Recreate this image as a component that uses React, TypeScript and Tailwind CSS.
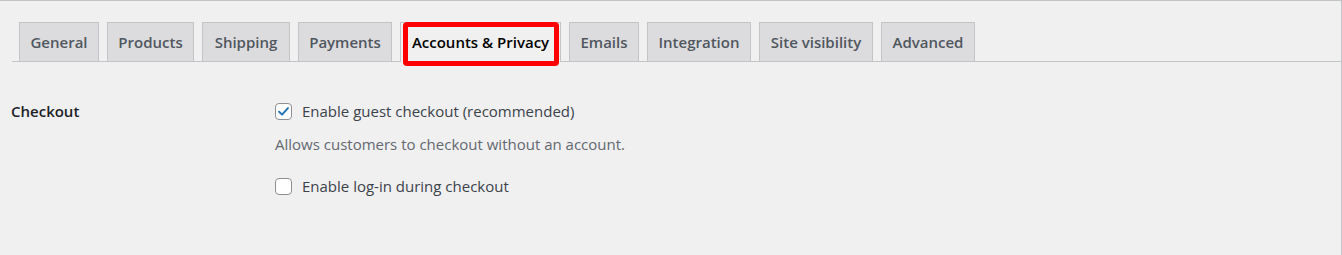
import React from "react";

const tabs = [
  { label: "General", width: "w-[80px]" },
  { label: "Products", width: "w-[87px]" },
  { label: "Shipping", width: "w-[88px]" },
  { label: "Payments", width: "w-[94px]" },
  { label: "Accounts & Privacy", width: "w-[161px]", active: true },
  { label: "Emails", width: "w-[70px]" },
  { label: "Integration", width: "w-[104px]" },
  { label: "Site visibility", width: "w-[114px]" },
  { label: "Advanced", width: "w-[94px]" },
];

const Checkbox = ({ checked }: { checked?: boolean }) => (
  <span className="flex h-[17px] w-[17px] shrink-0 items-center justify-center rounded-[4px] border border-[#8c8f94] bg-white">
    {checked ? (
      <svg viewBox="0 0 20 20" className="h-[15px] w-[15px]">
        <path
          d="M4.2 10.4 L8.1 14.2 L15.9 5.4"
          fill="none"
          stroke="#2271b1"
          strokeWidth="2.6"
          strokeLinecap="round"
          strokeLinejoin="round"
        />
      </svg>
    ) : null}
  </span>
);

export default function App() {
  return (
    <div
      className="h-[255px] w-full border-t border-r border-[#c3c4c7] bg-[#f0f0f1] text-[15px] text-[#3c434a]"
      style={{ fontFamily: '"Open Sans", "Noto Sans", sans-serif' }}
    >
      <nav className="ml-[12px] flex gap-[8px] border-b border-[#c3c4c7] pl-[7px] pt-[21px]">
        {tabs.map((tab) => (
          <div
            key={tab.label}
            className={
              tab.active
                ? `${tab.width} relative -mb-px flex h-[40px] items-center justify-center border border-b-0 border-[#c3c4c7] bg-[#f0f0f1] font-semibold text-black`
                : `${tab.width} flex h-[39px] items-center justify-center border border-b-0 border-[#c3c4c7] bg-[#dcdcde] font-semibold text-[#50575e]`
            }
          >
            {tab.label}
            {tab.active ? (
              <span className="pointer-events-none absolute top-[-1px] right-[1px] bottom-[-4px] left-[2px] rounded-[4px] border-[5px] border-[#ff0000]" />
            ) : null}
          </div>
        ))}
      </nav>

      <div className="flex pt-[38px]">
        <div className="w-[275px] shrink-0 pl-[11px] font-semibold text-[#1d2327]">Checkout</div>
        <div className="flex flex-col">
          <label className="flex items-center gap-[10px]">
            <Checkbox checked />
            <span>Enable guest checkout (recommended)</span>
          </label>
          <p className="mt-[10px] text-[#646970]">Allows customers to checkout without an account.</p>
          <label className="mt-[20px] flex items-center gap-[10px]">
            <Checkbox />
            <span>Enable log-in during checkout</span>
          </label>
        </div>
      </div>
    </div>
  );
}
